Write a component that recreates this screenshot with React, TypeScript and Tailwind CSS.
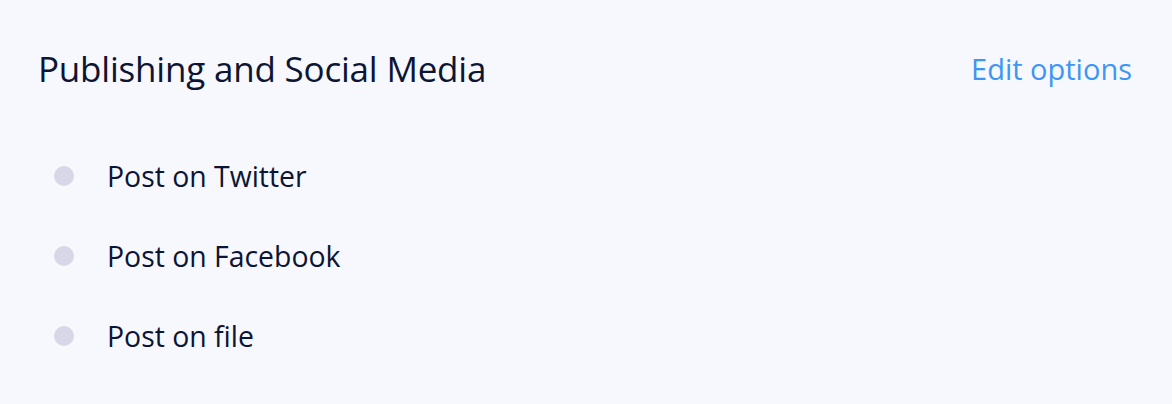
export default function App() {
  const items = ["Post on Twitter", "Post on Facebook", "Post on file"];

  return (
    <div
      className="w-[1172px] h-[404px] bg-[#f7f8fe] pl-[38px] pr-[40px] pt-[42px]"
      style={{ fontFamily: '"Open Sans", "Noto Sans", sans-serif' }}
    >
      <div className="flex items-center justify-between h-[52px]">
        <h2 className="text-[35px] leading-none text-[#0c1533] tracking-[-0.2px]">
          Publishing and Social Media
        </h2>
        <a className="text-[29px] leading-none text-[#3d96f5] cursor-pointer">Edit options</a>
      </div>

      <ul className="mt-[64px] flex flex-col gap-[44px] pl-[16px]">
        {items.map((item) => (
          <li key={item} className="flex items-center h-[36px]">
            <span className="w-[20px] h-[20px] rounded-full bg-[#d6d8e8] shrink-0" />
            <span className="ml-[33px] text-[28.4px] leading-none text-[#0c1533]">{item}</span>
          </li>
        ))}
      </ul>
    </div>
  );
}
